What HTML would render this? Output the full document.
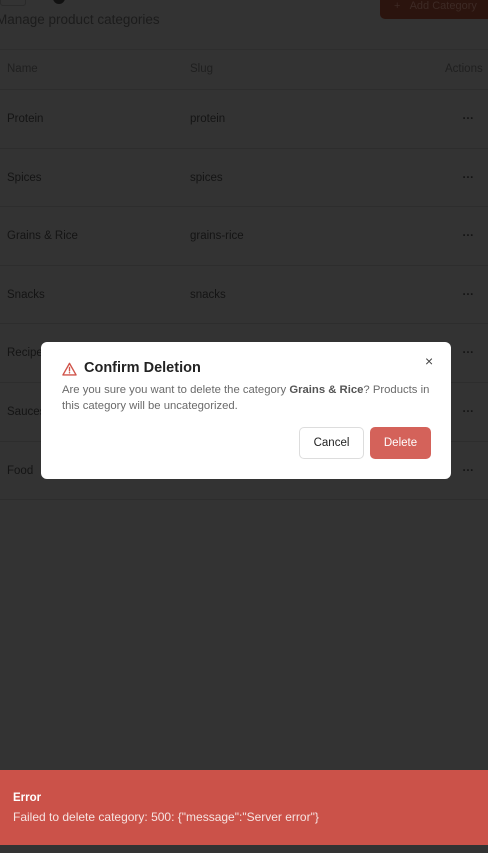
<!DOCTYPE html>
<html><head><style>
*{box-sizing:border-box;margin:0;padding:0}
body{width:488px;height:853px;background:#333;font-family:"Liberation Sans",sans-serif;position:relative;overflow:hidden;color:#111}
.abs{position:absolute}
.row{position:absolute;left:0;width:488px;height:59px;border-top:1px solid #2d2d2d;font-size:11.5px;color:#141414}
.row span{position:absolute;top:23px}
.dots{right:14px;font-weight:bold}
</style></head><body>
<div class="abs" style="left:0;top:-6px;width:26px;height:12px;border:1px solid #2a2a2a;border-radius:3px"></div>
<div class="abs" style="left:53px;top:-8px;width:12px;height:12px;border-radius:50%;background:#111"></div>
<div class="abs" style="left:-4px;top:12px;font-size:13.5px;color:#1c1c1c">Manage product categories</div>
<div class="abs" style="left:380px;top:-10px;width:120px;height:29px;background:#2b140e;border-radius:5px;color:#3d2a25;font-size:11px;padding:10px 0 0 14px">+&nbsp;&nbsp;&nbsp;Add Category</div>
<div class="abs" style="left:0;top:49px;width:488px;height:1px;background:#2e2e2e"></div>
<div class="abs" style="left:7px;top:63px;font-size:11.5px;color:#1f1f1f">Name</div>
<div class="abs" style="left:190px;top:63px;font-size:11.5px;color:#1f1f1f">Slug</div>
<div class="abs" style="left:445px;top:63px;font-size:11.5px;color:#1f1f1f">Actions</div>
<div class="row" style="top:89px"><span style="left:7px">Protein</span><span style="left:190px">protein</span><span class="dots">···</span></div>
<div class="row" style="top:148px"><span style="left:7px">Spices</span><span style="left:190px">spices</span><span class="dots">···</span></div>
<div class="row" style="top:206px"><span style="left:7px">Grains &amp; Rice</span><span style="left:190px">grains-rice</span><span class="dots">···</span></div>
<div class="row" style="top:265px"><span style="left:7px">Snacks</span><span style="left:190px">snacks</span><span class="dots">···</span></div>
<div class="row" style="top:323px"><span style="left:7px">Recipes</span><span class="dots">···</span></div>
<div class="row" style="top:382px"><span style="left:7px">Sauces</span><span class="dots">···</span></div>
<div class="row" style="top:441px;border-bottom:1px solid #2d2d2d"><span style="left:7px">Food</span><span class="dots">···</span></div>

<div class="abs" style="left:41px;top:342px;width:410px;height:137px;background:#fff;border-radius:6px">
<svg class="abs" style="left:21px;top:20px" width="15" height="14" viewBox="0 0 24 22"><path d="M12 2 L22.5 20.5 H1.5 Z" fill="none" stroke="#d0544a" stroke-width="2.2" stroke-linejoin="round"/><path d="M12 8.5v5.5" stroke="#d0544a" stroke-width="2.2" stroke-linecap="round"/><circle cx="12" cy="17" r="1.2" fill="#d0544a"/></svg>
<div class="abs" style="left:43px;top:18px;font-size:14.5px;font-weight:bold;color:#222">Confirm Deletion</div>
<div class="abs" style="left:384px;top:11px;font-size:14px;color:#444">×</div>
<div class="abs" style="left:21px;top:40px;width:368px;font-size:11.3px;line-height:16px;color:#6a6a6a">Are you sure you want to delete the category <b style="color:#555">Grains &amp; Rice</b>? Products in this category will be uncategorized.</div>
<div class="abs" style="left:258px;top:85px;width:65px;height:32px;border:1px solid #ddd;border-radius:5px;font-size:11.5px;color:#222;text-align:center;line-height:30px">Cancel</div>
<div class="abs" style="left:329px;top:85px;width:61px;height:32px;background:#d4625a;border-radius:5px;font-size:11.5px;color:#fff;text-align:center;line-height:32px">Delete</div>
</div>

<div class="abs" style="left:0;top:770px;width:488px;height:75px;background:#cb5249;color:#fff">
<div class="abs" style="left:13px;top:22px;font-size:11.5px;font-weight:bold">Error</div>
<div class="abs" style="left:13px;top:40px;font-size:12px;color:#f6e3e1">Failed to delete category: 500: {"message":"Server error"}</div>
</div>
</body></html>
